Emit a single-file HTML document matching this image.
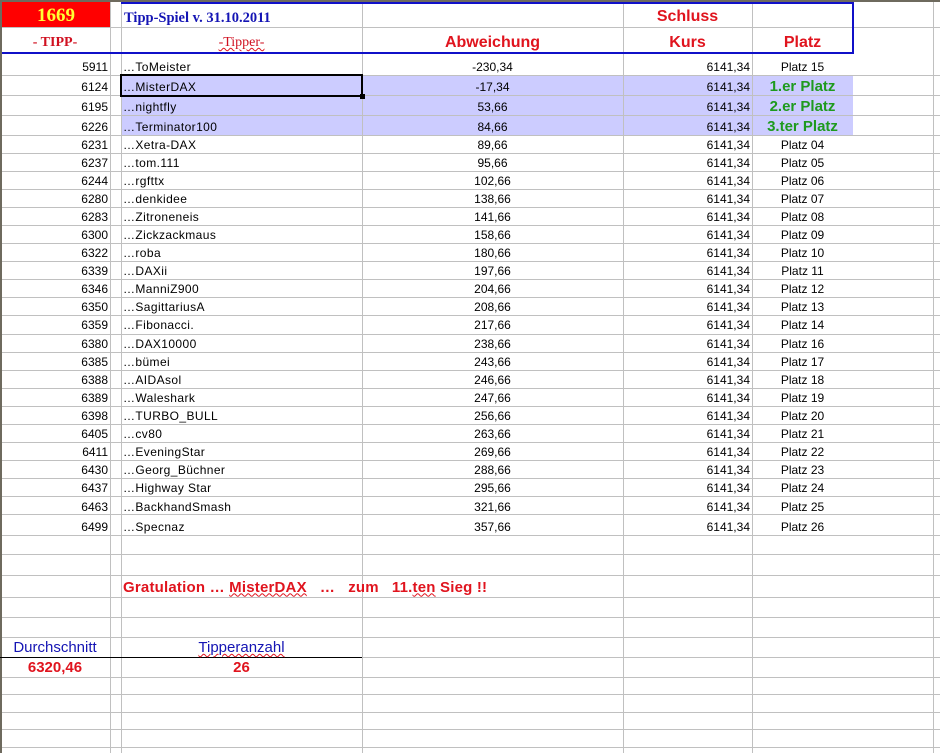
<!DOCTYPE html>
<html><head><meta charset="utf-8"><style>
body{margin:0;width:940px;height:753px;background:#fff;position:relative;overflow:hidden;font-family:"Liberation Sans",Arial,sans-serif;font-size:12px;color:#000}
.h{position:absolute;left:0;width:940px;height:1px;background:#c0c0c0}
.v{position:absolute;top:0;height:753px;width:1px;background:#c0c0c0}
.r{position:absolute;left:0;width:940px;display:flex;align-items:center}
.r > span{position:absolute;white-space:nowrap;line-height:16px}
.a{right:832px;text-align:right}
.b{left:123px;letter-spacing:0.4px}
.c{left:362px;width:261px;text-align:center}
.d{right:190px;text-align:right}
.e{left:752px;width:101px;text-align:center}
.g{color:#1e9a1e;font-weight:bold;font-size:15px}
.hl{position:absolute;left:121px;width:732px;background:#ccccff}
.red{color:#e0141e;font-weight:bold;font-size:16px}
.wavy{text-decoration:underline wavy #e0141e;text-decoration-thickness:1px}
</style></head><body>
<div class="hl" style="top:75px;height:60px"></div>
<div style="position:absolute;left:2px;top:2px;width:108px;height:25px;background:#ff0000"></div>

<div class="h" style="top:27px"></div><div class="h" style="top:75px"></div><div class="h" style="top:95px"></div><div class="h" style="top:115px"></div><div class="h" style="top:135px"></div><div class="h" style="top:153px"></div><div class="h" style="top:171px"></div><div class="h" style="top:189px"></div><div class="h" style="top:207px"></div><div class="h" style="top:225px"></div><div class="h" style="top:243px"></div><div class="h" style="top:261px"></div><div class="h" style="top:279px"></div><div class="h" style="top:297px"></div><div class="h" style="top:315px"></div><div class="h" style="top:334px"></div><div class="h" style="top:352px"></div><div class="h" style="top:370px"></div><div class="h" style="top:388px"></div><div class="h" style="top:406px"></div><div class="h" style="top:424px"></div><div class="h" style="top:442px"></div><div class="h" style="top:460px"></div><div class="h" style="top:478px"></div><div class="h" style="top:496px"></div><div class="h" style="top:514px"></div><div class="h" style="top:535px"></div><div class="h" style="top:554px"></div><div class="h" style="top:575px"></div><div class="h" style="top:597px"></div><div class="h" style="top:617px"></div><div class="h" style="top:637px"></div><div class="h" style="top:657px"></div><div class="h" style="top:677px"></div><div class="h" style="top:694px"></div><div class="h" style="top:712px"></div><div class="h" style="top:729px"></div><div class="h" style="top:747px"></div>

<div class="v" style="left:110px"></div><div class="v" style="left:121px"></div><div class="v" style="left:362px"></div><div class="v" style="left:623px"></div><div class="v" style="left:752px"></div><div class="v" style="left:933px"></div>
<div style="position:absolute;left:0;top:0;width:2px;height:753px;background:#6e6a5e"></div>
<div style="position:absolute;left:0;top:0;width:940px;height:2px;background:#6e6a5e"></div>

<div style="position:absolute;left:121px;top:2px;width:733px;height:2px;background:#1010c8"></div>
<div style="position:absolute;left:852px;top:2px;width:2px;height:52px;background:#1010c8"></div>
<div style="position:absolute;left:2px;top:52px;width:852px;height:2px;background:#1010c8"></div>
<div style="position:absolute;left:0;top:657px;width:362px;height:1px;background:#000"></div>

<div style="position:absolute;left:120px;top:74px;width:239px;height:19px;border:2px solid #000"></div>
<div style="position:absolute;left:360px;top:94px;width:5px;height:5px;background:#000"></div>

<div class="r" style="top:3px;height:25px">
<span style="left:2px;width:108px;text-align:center;color:#ffff33;font:bold 19px 'Liberation Serif',serif;line-height:22px">1669</span>
<span style="left:124px;top:7px;color:#1414b4;font:bold 14.5px 'Liberation Serif',serif">Tipp-Spiel v. 31.10.2011</span>
<span class="red" style="left:623px;width:129px;text-align:center;top:6px">Schluss</span>
</div>
<div class="r" style="top:31px;height:24px">
<span style="left:0;width:110px;text-align:center;color:#d01020;font:bold 14px 'Liberation Serif',serif">- TIPP-</span>
<span class="wavy" style="left:121px;width:241px;text-align:center;color:#d01020;font:14px 'Liberation Serif',serif">-Tipper-</span>
<span class="red c">Abweichung</span>
<span class="red" style="left:623px;width:129px;text-align:center">Kurs</span>
<span class="red e">Platz</span>
</div>

<div class="r" style="top:57px;height:20px"><span class="a">5911</span><span class="b">…ToMeister</span><span class="c">-230,34</span><span class="d">6141,34</span><span class="e">Platz 15</span></div>
<div class="r" style="top:77px;height:20px"><span class="a">6124</span><span class="b">…MisterDAX</span><span class="c">-17,34</span><span class="d">6141,34</span><span class="e g">1.er Platz</span></div>
<div class="r" style="top:97px;height:20px"><span class="a">6195</span><span class="b">…nightfly</span><span class="c">53,66</span><span class="d">6141,34</span><span class="e g">2.er Platz</span></div>
<div class="r" style="top:117px;height:20px"><span class="a">6226</span><span class="b">…Terminator100</span><span class="c">84,66</span><span class="d">6141,34</span><span class="e g">3.ter Platz</span></div>
<div class="r" style="top:136px;height:18px"><span class="a">6231</span><span class="b">…Xetra-DAX</span><span class="c">89,66</span><span class="d">6141,34</span><span class="e">Platz 04</span></div>
<div class="r" style="top:154px;height:18px"><span class="a">6237</span><span class="b">…tom.111</span><span class="c">95,66</span><span class="d">6141,34</span><span class="e">Platz 05</span></div>
<div class="r" style="top:172px;height:18px"><span class="a">6244</span><span class="b">…rgfttx</span><span class="c">102,66</span><span class="d">6141,34</span><span class="e">Platz 06</span></div>
<div class="r" style="top:190px;height:18px"><span class="a">6280</span><span class="b">…denkidee</span><span class="c">138,66</span><span class="d">6141,34</span><span class="e">Platz 07</span></div>
<div class="r" style="top:208px;height:18px"><span class="a">6283</span><span class="b">…Zitroneneis</span><span class="c">141,66</span><span class="d">6141,34</span><span class="e">Platz 08</span></div>
<div class="r" style="top:226px;height:18px"><span class="a">6300</span><span class="b">…Zickzackmaus</span><span class="c">158,66</span><span class="d">6141,34</span><span class="e">Platz 09</span></div>
<div class="r" style="top:244px;height:18px"><span class="a">6322</span><span class="b">…roba</span><span class="c">180,66</span><span class="d">6141,34</span><span class="e">Platz 10</span></div>
<div class="r" style="top:262px;height:18px"><span class="a">6339</span><span class="b">…DAXii</span><span class="c">197,66</span><span class="d">6141,34</span><span class="e">Platz 11</span></div>
<div class="r" style="top:280px;height:18px"><span class="a">6346</span><span class="b">…ManniZ900</span><span class="c">204,66</span><span class="d">6141,34</span><span class="e">Platz 12</span></div>
<div class="r" style="top:298px;height:18px"><span class="a">6350</span><span class="b">…SagittariusA</span><span class="c">208,66</span><span class="d">6141,34</span><span class="e">Platz 13</span></div>
<div class="r" style="top:316px;height:18px"><span class="a">6359</span><span class="b">…Fibonacci.</span><span class="c">217,66</span><span class="d">6141,34</span><span class="e">Platz 14</span></div>
<div class="r" style="top:335px;height:18px"><span class="a">6380</span><span class="b">…DAX10000</span><span class="c">238,66</span><span class="d">6141,34</span><span class="e">Platz 16</span></div>
<div class="r" style="top:353px;height:18px"><span class="a">6385</span><span class="b">…bümei</span><span class="c">243,66</span><span class="d">6141,34</span><span class="e">Platz 17</span></div>
<div class="r" style="top:371px;height:18px"><span class="a">6388</span><span class="b">…AIDAsol</span><span class="c">246,66</span><span class="d">6141,34</span><span class="e">Platz 18</span></div>
<div class="r" style="top:389px;height:18px"><span class="a">6389</span><span class="b">…Waleshark</span><span class="c">247,66</span><span class="d">6141,34</span><span class="e">Platz 19</span></div>
<div class="r" style="top:407px;height:18px"><span class="a">6398</span><span class="b">…TURBO_BULL</span><span class="c">256,66</span><span class="d">6141,34</span><span class="e">Platz 20</span></div>
<div class="r" style="top:425px;height:18px"><span class="a">6405</span><span class="b">…cv80</span><span class="c">263,66</span><span class="d">6141,34</span><span class="e">Platz 21</span></div>
<div class="r" style="top:443px;height:18px"><span class="a">6411</span><span class="b">…EveningStar</span><span class="c">269,66</span><span class="d">6141,34</span><span class="e">Platz 22</span></div>
<div class="r" style="top:461px;height:18px"><span class="a">6430</span><span class="b">…Georg_Büchner</span><span class="c">288,66</span><span class="d">6141,34</span><span class="e">Platz 23</span></div>
<div class="r" style="top:479px;height:18px"><span class="a">6437</span><span class="b">…Highway Star</span><span class="c">295,66</span><span class="d">6141,34</span><span class="e">Platz 24</span></div>
<div class="r" style="top:498px;height:18px"><span class="a">6463</span><span class="b">…BackhandSmash</span><span class="c">321,66</span><span class="d">6141,34</span><span class="e">Platz 25</span></div>
<div class="r" style="top:517px;height:20px"><span class="a">6499</span><span class="b">…Specnaz</span><span class="c">357,66</span><span class="d">6141,34</span><span class="e">Platz 26</span></div>

<div class="r" style="top:577px;height:21px"><span class="red" style="left:123px;font-size:15px;letter-spacing:0.2px;white-space:pre">Gratulation … <span class="wavy">MisterDAX</span>   …   zum   11.<span class="wavy">ten</span> Sieg !!</span></div>
<div class="r" style="top:638px;height:20px"><span style="left:0;width:110px;text-align:center;color:#1414b4;font-size:15px">Durchschnitt</span><span class="wavy" style="left:121px;width:241px;text-align:center;color:#1414b4;font-size:15px">Tipperanzahl</span></div>
<div class="r" style="top:658px;height:19px"><span class="red" style="left:0;width:110px;text-align:center;font-size:15px">6320,46</span><span class="red" style="left:121px;width:241px;text-align:center;font-size:15px">26</span></div>
</body></html>
